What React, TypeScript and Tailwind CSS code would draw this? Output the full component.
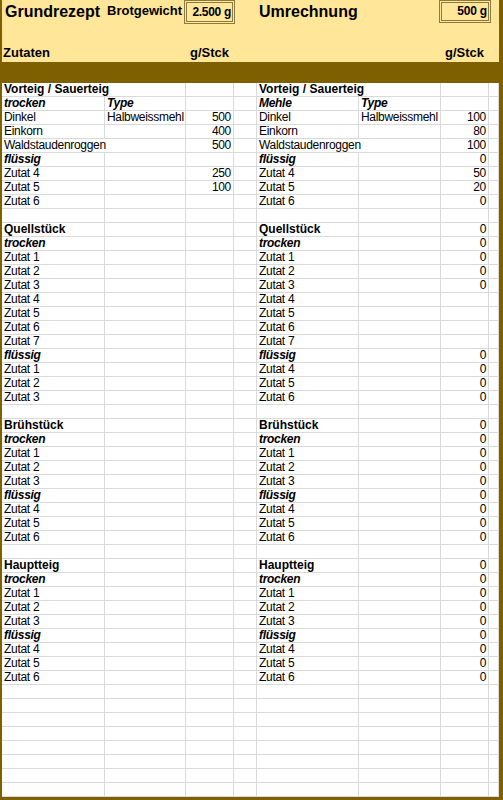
import React from 'react';

type Side = { a?: string; b?: string; c?: string; span?: boolean; st?: 'b' | 'bi' };

const COLS = 'grid grid-cols-[103px_81px_48px_23px_102px_82px_48px_10px]';
const CELL = 'h-[14px] border-r border-b border-[#dadada] px-[2px] leading-[13px] whitespace-nowrap overflow-hidden';

function section(title: string, dry: string[], wet: string[], vals: boolean) {
  const rows: Side[] = [{ a: title, st: 'b' }, { a: 'trocken', st: 'bi' }];
  dry.forEach(z => rows.push({ a: z }));
  rows.push({ a: 'flüssig', st: 'bi' });
  wet.forEach(z => rows.push({ a: z }));
  rows.push({});
  if (vals) rows.forEach(r => { if (r.a) r.c = '0'; });
  return rows;
}

const left: Side[] = [
  { a: 'Vorteig / Sauerteig', span: true, st: 'b' },
  { a: 'trocken', b: 'Type', st: 'bi' },
  { a: 'Dinkel', b: 'Halbweissmehl', c: '500' },
  { a: 'Einkorn', c: '400' },
  { a: 'Waldstaudenroggen', span: true, c: '500' },
  { a: 'flüssig', st: 'bi' },
  { a: 'Zutat 4', c: '250' },
  { a: 'Zutat 5', c: '100' },
  { a: 'Zutat 6' },
  {},
  ...section('Quellstück', ['Zutat 1', 'Zutat 2', 'Zutat 3', 'Zutat 4', 'Zutat 5', 'Zutat 6', 'Zutat 7'], ['Zutat 1', 'Zutat 2', 'Zutat 3'], false),
  ...section('Brühstück', ['Zutat 1', 'Zutat 2', 'Zutat 3'], ['Zutat 4', 'Zutat 5', 'Zutat 6'], false),
  ...section('Hauptteig', ['Zutat 1', 'Zutat 2', 'Zutat 3'], ['Zutat 4', 'Zutat 5', 'Zutat 6'], false),
];

const quell = section('Quellstück', ['Zutat 1', 'Zutat 2', 'Zutat 3', 'Zutat 4', 'Zutat 5', 'Zutat 6', 'Zutat 7'], ['Zutat 4', 'Zutat 5', 'Zutat 6'], true);
[5, 6, 7, 8].forEach(i => { quell[i].c = undefined; });

const right: Side[] = [
  { a: 'Vorteig / Sauerteig', span: true, st: 'b' },
  { a: 'Mehle', b: 'Type', st: 'bi' },
  { a: 'Dinkel', b: 'Halbweissmehl', c: '100' },
  { a: 'Einkorn', c: '80' },
  { a: 'Waldstaudenroggen', span: true, c: '100' },
  { a: 'flüssig', st: 'bi', c: '0' },
  { a: 'Zutat 4', c: '50' },
  { a: 'Zutat 5', c: '20' },
  { a: 'Zutat 6', c: '0' },
  {},
  ...quell,
  ...section('Brühstück', ['Zutat 1', 'Zutat 2', 'Zutat 3'], ['Zutat 4', 'Zutat 5', 'Zutat 6'], true),
  ...section('Hauptteig', ['Zutat 1', 'Zutat 2', 'Zutat 3'], ['Zutat 4', 'Zutat 5', 'Zutat 6'], true),
];

const ROWS = 51;

function labelClass(st?: 'b' | 'bi') {
  if (st === 'b') return 'font-bold';
  if (st === 'bi') return 'font-bold italic tracking-[-0.3px]';
  return 'tracking-[-0.3px]';
}

function SideCells({ s }: { s: Side }) {
  const lc = labelClass(s.st);
  return (
    <>
      {s.span ? (
        <div className={`${CELL} col-span-2 ${lc}`}>{s.a}</div>
      ) : (
        <>
          <div className={`${CELL} ${lc}`}>{s.a}</div>
          <div className={`${CELL} ${s.st === 'bi' ? lc : 'tracking-[-0.3px]'}`}>{s.b}</div>
        </>
      )}
      <div className={`${CELL} text-right tracking-[-0.3px]`}>{s.c}</div>
    </>
  );
}

function Header() {
  return (
    <div className={`${COLS} grid-rows-[24px_38px] bg-[#FFE699] text-black`}>
      <div className="pl-[3px] pt-[2px] text-[16px] leading-[20px] font-bold">Grundrezept</div>
      <div className="pl-[2px] pt-[1px] text-[13px] leading-[20px] font-bold">Brotgewicht</div>
      <div className="-ml-[2px] -mr-[1px] h-[24px] border-[3px] border-double border-[#8c7a3e] pr-[1px] text-right text-[12px] leading-[18px] font-bold tracking-[-0.3px]">
        2.500 g
      </div>
      <div />
      <div className="pl-[2px] pt-[2px] text-[16px] leading-[20px] font-bold">Umrechnung</div>
      <div />
      <div className="-ml-[2px] -mr-[2px] h-[23px] border-[3px] border-double border-[#8c7a3e] pr-[1px] text-right text-[12px] leading-[17px] font-bold tracking-[-0.2px]">
        500 g
      </div>
      <div />

      <div className="self-end pl-[1px] pb-[1px] text-[13px] leading-[16px] font-bold">Zutaten</div>
      <div />
      <div className="self-end pr-[5px] pb-[1px] text-right text-[13px] leading-[16px] font-bold">g/Stck</div>
      <div />
      <div />
      <div />
      <div className="self-end pr-[5px] pb-[1px] text-right text-[13px] leading-[16px] font-bold">g/Stck</div>
      <div />
    </div>
  );
}

export default function App() {
  return (
    <div className="w-[503px] h-[800px] overflow-hidden bg-white">
      <div className="border-l-2 border-r-4 border-b-[3px] border-[#7F6000] font-['Liberation_Sans',Arial,sans-serif] text-[12px] text-black">
        <Header />
        <div className="h-[21px] bg-[#7F6000]" />
        {Array.from({ length: ROWS }, (_, i) => (
          <div key={i} className={COLS}>
            <SideCells s={left[i] ?? {}} />
            <div className={CELL} />
            <SideCells s={right[i] ?? {}} />
            <div className={CELL} />
          </div>
        ))}
      </div>
    </div>
  );
}
